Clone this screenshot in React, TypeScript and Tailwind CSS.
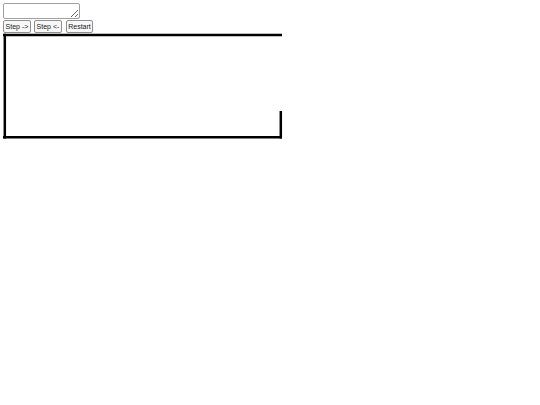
export default function App() {
  return (
    <div className="p-[3px] font-['Liberation_Sans',Arial,sans-serif] text-black">
      <textarea className="block h-[16px] w-[77px] rounded-[2px] border border-[#a0a0a0] bg-white p-0 text-[7px] outline-none" />
      <div className="mt-[1px] flex items-center">
        <button className="h-[13px] w-[28px] rounded-[2px] border border-[#8f8f8f] bg-[#f7f7f7] p-0 text-[7px] leading-none text-[#222]">
          Step -&gt;
        </button>
        <button className="ml-[3px] h-[13px] w-[28px] rounded-[2px] border border-[#8f8f8f] bg-[#f7f7f7] p-0 text-[7px] leading-none text-[#222]">
          Step &lt;-
        </button>
        <button className="ml-[4px] h-[13px] w-[27px] rounded-[2px] border border-[#8f8f8f] bg-[#f7f7f7] p-0 text-[7px] leading-none text-[#222]">
          Restart
        </button>
      </div>
      <svg width="282" height="108" className="block">
        <g stroke="#000" strokeWidth="2.5" fill="none">
          <line x1="0" y1="2" x2="279" y2="2" />
          <line x1="1.8" y1="0.8" x2="1.8" y2="105.5" />
          <line x1="0" y1="104.3" x2="279" y2="104.3" />
          <line x1="277.8" y1="78" x2="277.8" y2="105.5" />
        </g>
      </svg>
    </div>
  );
}
